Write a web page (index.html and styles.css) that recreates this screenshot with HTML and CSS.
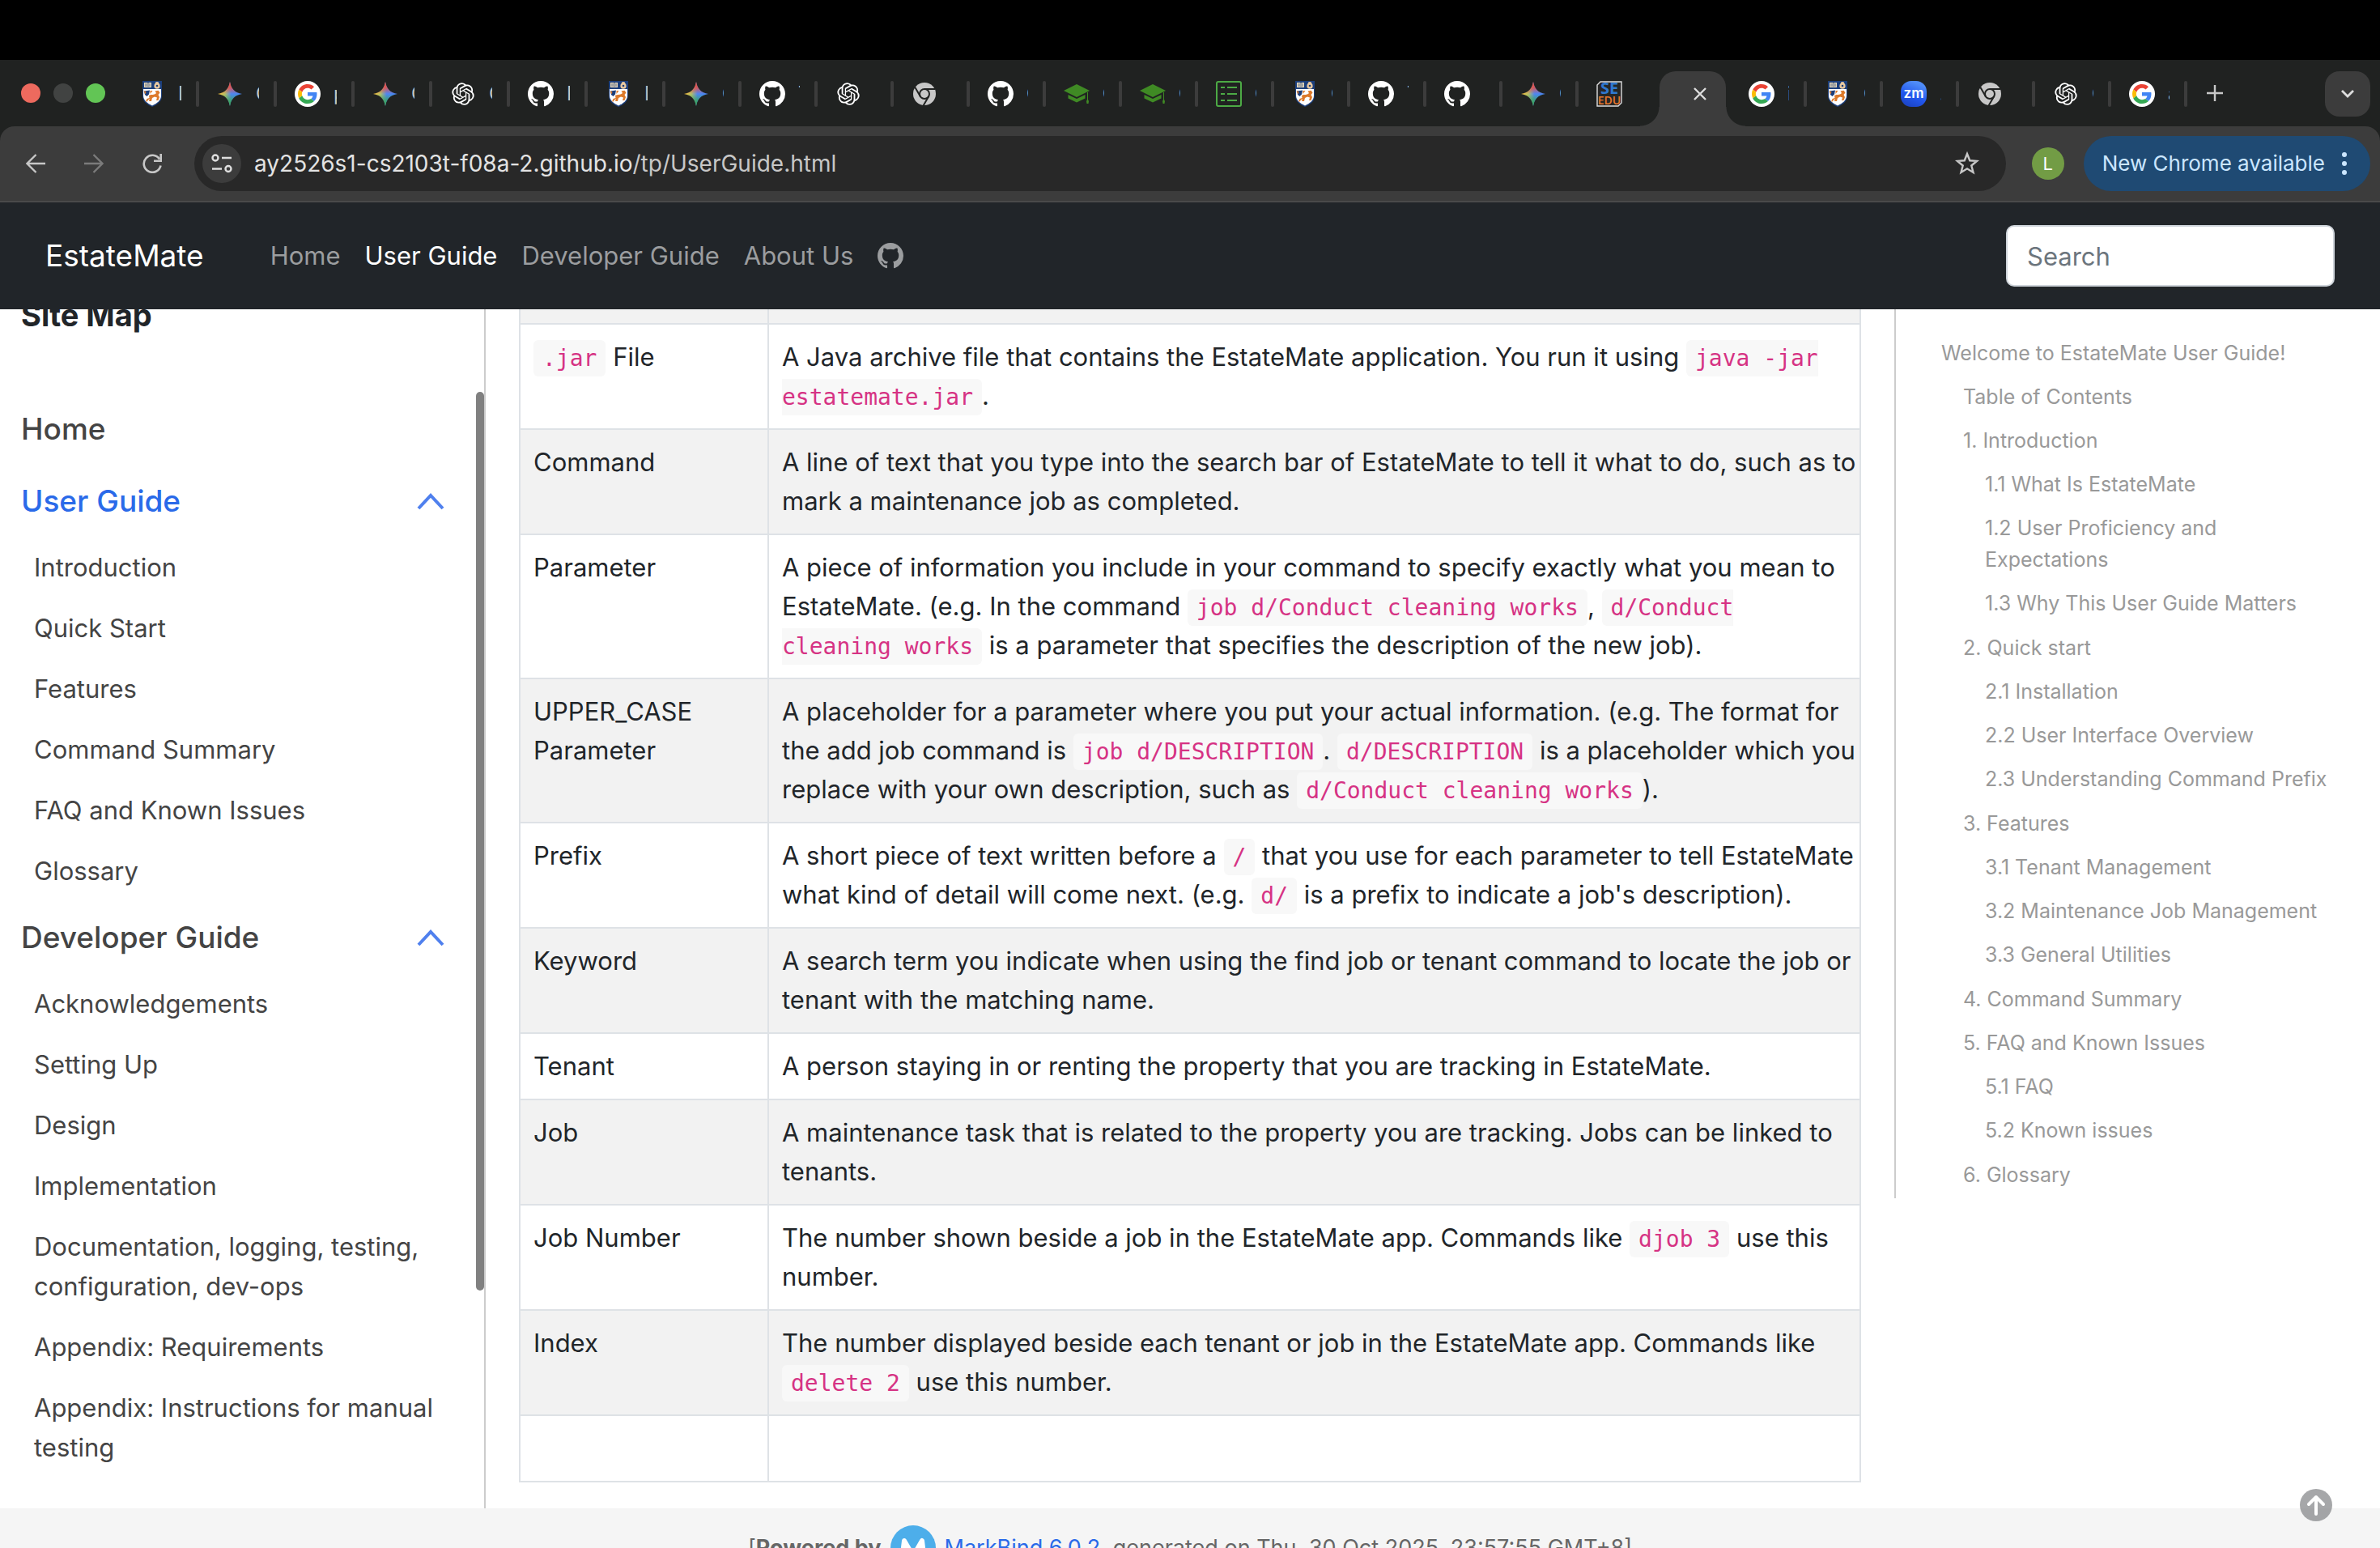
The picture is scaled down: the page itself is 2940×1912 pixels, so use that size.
FILE: index.html
```html
<!DOCTYPE html>
<html lang="en">
<head>
<meta charset="utf-8">
<title>EstateMate - User Guide</title>
<link rel="stylesheet" href="styles.css">
</head>
<body>
<svg class="sprite" aria-hidden="true">
  <defs>
    <linearGradient id="gem-fill" x1="0" y1="0.5" x2="1" y2="0.5"><stop offset="0.05" stop-color="#f5c33b"/><stop offset="0.3" stop-color="#b5bf6a"/><stop offset="0.55" stop-color="#4f86f3"/><stop offset="1" stop-color="#4285f4"/></linearGradient>
    <linearGradient id="gem-top" x1="0.5" y1="0" x2="0.5" y2="0.5"><stop offset="0.1" stop-color="#ee4d3f"/><stop offset="0.5" stop-color="#ee4d3f" stop-opacity="0.8"/><stop offset="1" stop-color="#ee4d3f" stop-opacity="0"/></linearGradient>
    <linearGradient id="gem-bottom" x1="0.5" y1="1" x2="0.5" y2="0.5"><stop offset="0.1" stop-color="#34a853"/><stop offset="0.5" stop-color="#34a853" stop-opacity="0.7"/><stop offset="1" stop-color="#34a853" stop-opacity="0"/></linearGradient>
    <linearGradient id="zoom-fill" x1="0" y1="1" x2="0.4" y2="0"><stop offset="0" stop-color="#1a3fb8"/><stop offset="0.5" stop-color="#2257ee"/><stop offset="1" stop-color="#4f8cf7"/></linearGradient>
  </defs>
  <symbol id="i-nus" viewBox="0 0 32 32">
    <path d="M4 0h24v18c0 7-5 11-12 14C9 29 4 25 4 18z" fill="#1c3f7c"/>
    <path d="M5 10h22v8c0 6-5 9.500-11 12.500C10 27.500 5 24 5 18z" fill="#fff"/>
    <path d="M6 2h4l1 .7L12 2h3v6h-3l-1 .6L10 8H6z" fill="#e9d9b8"/>
    <path d="M11 2.500v6M7 4h3M12 4h2M7 6h3M12 6h2" stroke="#1c3f7c" stroke-width="0.700"/>
    <circle cx="22" cy="3.500" r="2.400" fill="#e9c9a0"/><circle cx="22" cy="6.200" r="3.600" fill="#e9c9a0"/><circle cx="22" cy="6" r="1.300" fill="#1c3f7c"/>
    <path d="M6 12.500l7-1-1 5-2.500 2.500L7 17z" fill="#1c3f7c"/><path d="M5.500 12l3 1.500-1 3zM13.500 12l3 0-3 4z" fill="#dd7a2b"/>
    <path d="M12 18c3-2 6 0 9-3l-1.500-2.500 4-.8 2 2.800-2 2.500 1.500 3-1.500 4h-2.500l1-3.500-3-1-3 1.500-1 4h-3l1-3-2 1.500-1.500 2H8l1.500-3.500 3-1z" fill="#dd7a2b"/>
  </symbol>
  <symbol id="i-gemini" viewBox="0 0 32 32">
    <path d="M16 1c1.500 9 6 13.500 15 15-9 1.500-13.500 6-15 15-1.500-9-6-13.500-15-15 9-1.500 13.500-6 15-15z" fill="url(#gem-fill)"/>
    <path d="M16 1c1.500 9 6 13.500 15 15-9 1.500-13.500 6-15 15-1.500-9-6-13.500-15-15 9-1.500 13.500-6 15-15z" fill="url(#gem-top)"/>
    <path d="M16 1c1.500 9 6 13.500 15 15-9 1.500-13.500 6-15 15-1.500-9-6-13.500-15-15 9-1.500 13.500-6 15-15z" fill="url(#gem-bottom)"/>
  </symbol>
  <symbol id="i-google" viewBox="-8 -8 64 64">
    <circle cx="24" cy="24" r="32" fill="#fff"/>
    <path fill="#ea4335" d="M24 9.500c3.540 0 6.710 1.220 9.210 3.600l6.850-6.850C35.900 2.380 30.470 0 24 0 14.620 0 6.510 5.380 2.560 13.220l7.980 6.190C12.430 13.720 17.740 9.500 24 9.500z"/>
    <path fill="#4285f4" d="M46.980 24.550c0-1.570-.15-3.090-.38-4.550H24v9.020h12.940c-.58 2.960-2.260 5.480-4.780 7.180l7.730 6c4.510-4.180 7.090-10.360 7.090-17.650z"/>
    <path fill="#fbbc05" d="M10.530 28.590c-.48-1.450-.76-2.990-.76-4.590s.27-3.140.76-4.590l-7.980-6.190C.92 16.460 0 20.120 0 24c0 3.880.92 7.540 2.560 10.780l7.970-6.190z"/>
    <path fill="#34a853" d="M24 48c6.480 0 11.930-2.130 15.890-5.810l-7.730-6c-2.150 1.450-4.920 2.300-8.160 2.300-6.260 0-11.570-4.220-13.470-9.910l-7.980 6.190C6.510 42.620 14.620 48 24 48z"/>
  </symbol>
  <symbol id="i-gpt" viewBox="-2 -2 28 28">
    <path fill="#fff" d="M22.2819 9.8211a5.9847 5.9847 0 0 0-.5157-4.9108 6.0462 6.0462 0 0 0-6.5098-2.9A6.0651 6.0651 0 0 0 4.9807 4.1818a5.9847 5.9847 0 0 0-3.9977 2.9 6.0462 6.0462 0 0 0 .7427 7.0966 5.98 5.98 0 0 0 .511 4.9107 6.051 6.051 0 0 0 6.5146 2.9001A5.9847 5.9847 0 0 0 13.2599 24a6.0557 6.0557 0 0 0 5.7718-4.2058 5.9894 5.9894 0 0 0 3.9977-2.9001 6.0557 6.0557 0 0 0-.7475-7.0729zm-9.022 12.6081a4.4755 4.4755 0 0 1-2.8764-1.0408l.1419-.0804 4.7783-2.7582a.7948.7948 0 0 0 .3927-.6813v-6.7369l2.02 1.1686a.071.071 0 0 1 .038.052v5.5826a4.504 4.504 0 0 1-4.4945 4.4944zm-9.6607-4.1254a4.4708 4.4708 0 0 1-.5346-3.0137l.142.0852 4.783 2.7582a.7712.7712 0 0 0 .7806 0l5.8428-3.3685v2.3324a.0804.0804 0 0 1-.0332.0615L9.74 19.9502a4.4992 4.4992 0 0 1-6.1408-1.6464zM2.3408 7.8956a4.485 4.485 0 0 1 2.3655-1.9728V11.6a.7664.7664 0 0 0 .3879.6765l5.8144 3.3543-2.0201 1.1685a.0757.0757 0 0 1-.071 0l-4.8303-2.7865A4.504 4.504 0 0 1 2.3408 7.872zm16.5963 3.8558L13.1038 8.364 15.1192 7.2a.0757.0757 0 0 1 .071 0l4.8303 2.7913a4.4944 4.4944 0 0 1-.6765 8.1042v-5.6772a.79.79 0 0 0-.407-.667zm2.0107-3.0231l-.142-.0852-4.7735-2.7818a.7759.7759 0 0 0-.7854 0L9.409 9.2297V6.8974a.0662.0662 0 0 1 .0284-.0615l4.8303-2.7866a4.4992 4.4992 0 0 1 6.6802 4.66zM8.3065 12.863l-2.02-1.1638a.0804.0804 0 0 1-.038-.0567V6.0742a4.4992 4.4992 0 0 1 7.3757-3.4537l-.142.0805L8.704 5.459a.7948.7948 0 0 0-.3927.6813zm1.0976-2.3654l2.602-1.4998 2.6069 1.4998v2.9994l-2.5974 1.4997-2.6067-1.4997Z"/>
  </symbol>
  <symbol id="i-github" viewBox="0 0 16 16">
    <path fill="currentColor" d="M8 0C3.580 0 0 3.580 0 8c0 3.540 2.290 6.530 5.470 7.590.4.070.55-.17.55-.38 0-.19-.01-.82-.01-1.490-2.010.37-2.530-.49-2.690-.94-.09-.23-.48-.94-.82-1.130-.28-.15-.68-.52-.01-.53.63-.01 1.080.58 1.230.82.72 1.210 1.870.87 2.330.66.07-.52.28-.87.51-1.070-1.780-.2-3.640-.89-3.640-3.950 0-.87.31-1.590.82-2.150-.08-.2-.36-1.020.08-2.120 0 0 .67-.21 2.200.82.64-.18 1.320-.27 2-.27s1.360.09 2 .27c1.530-1.040 2.200-.82 2.200-.82.44 1.100.16 1.920.08 2.120.51.56.82 1.270.82 2.150 0 3.070-1.870 3.750-3.650 3.950.29.25.54.73.54 1.480 0 1.070-.01 1.930-.01 2.200 0 .21.15.46.55.38A8.010 8.010 0 0 0 16 8c0-4.420-3.580-8-8-8z"/>
  </symbol>
  <symbol id="i-chrome" viewBox="0 0 32 32">
    <circle cx="16" cy="16" r="14" fill="#c7c7c7"/>
    <circle cx="16" cy="16" r="7" fill="#202221"/>
    <circle cx="16" cy="16" r="5" fill="#c7c7c7"/>
    <path d="M16 10h13M10.800 19L4.300 7.800M21.200 19l-6.500 11.300" stroke="#202221" stroke-width="2" fill="none"/>
  </symbol>
  <symbol id="i-cap" viewBox="0 0 32 32">
    <path d="M16 4l16 8-16 8L0 12z" fill="#3f8a24"/><path d="M5.500 17L16 22l10.500-5v4.500L16 26.500 5.500 21.500z" fill="#3f8a24"/><path d="M29 14h1v9l1 2-.5 3h-2l-.5-3 1-2z" fill="#3f8a24"/>
  </symbol>
  <symbol id="i-list" viewBox="0 0 32 32">
    <rect x="1" y="1" width="30" height="30" rx="2" fill="none" stroke="#4caa45" stroke-width="2"/>
    <path d="M6 8h5M14 8h12M6 16h5M14 16h12M6 24h5M14 24h12" stroke="#4caa45" stroke-width="2"/>
  </symbol>
  <symbol id="i-seedu" viewBox="0 0 32 32">
    <path d="M5 1h26v26l-4 4H1V5z" fill="#262626" stroke="#ddd" stroke-width="1.400"/>
    <text x="16" y="16" text-anchor="middle" font-family="Open Sans" font-size="20" font-weight="700" fill="#2f78d0">SE</text>
    <text x="16" y="29" text-anchor="middle" font-family="Open Sans" font-size="14" font-weight="600" fill="#e8782c">EDU</text>
  </symbol>
  <symbol id="i-zoom" viewBox="0 0 32 32">
    <rect width="32" height="32" rx="13" fill="url(#zoom-fill)"/>
    <text x="16" y="21" text-anchor="middle" font-size="17" font-weight="600" fill="#fff">zm</text>
  </symbol>
</svg>

<div class="screen-top"></div>

<div class="window-top">
<div class="tabstrip">
  <div class="lights"><span class="light red"></span><span class="light off"></span><span class="light green"></span></div>
  <div class="tabs">
    <div class="tab wide"><svg><use href="#i-nus"/></svg><span>N</span></div>
    <div class="tab wide"><svg><use href="#i-gemini"/></svg><span>C</span></div>
    <div class="tab wide"><svg><use href="#i-google"/></svg><span>p</span></div>
    <div class="tab wide"><svg><use href="#i-gemini"/></svg><span>C</span></div>
    <div class="tab wide"><svg><use href="#i-gpt"/></svg><span>C</span></div>
    <div class="tab wide"><svg><use href="#i-github"/></svg><span>P</span></div>
    <div class="tab wide"><svg><use href="#i-nus"/></svg><span>N</span></div>
    <div class="tab"><svg><use href="#i-gemini"/></svg><span>C</span></div>
    <div class="tab"><svg><use href="#i-github"/></svg><span>T</span></div>
    <div class="tab"><svg><use href="#i-gpt"/></svg></div>
    <div class="tab"><svg><use href="#i-chrome"/></svg></div>
    <div class="tab"><svg><use href="#i-github"/></svg><span>C</span></div>
    <div class="tab"><svg><use href="#i-cap"/></svg><span>C</span></div>
    <div class="tab"><svg><use href="#i-cap"/></svg><span>C</span></div>
    <div class="tab"><svg><use href="#i-list"/></svg><span>C</span></div>
    <div class="tab"><svg><use href="#i-nus"/></svg><span>C</span></div>
    <div class="tab"><svg><use href="#i-github"/></svg><span>T</span></div>
    <div class="tab"><svg><use href="#i-github"/></svg></div>
    <div class="tab"><svg><use href="#i-gemini"/></svg><span>C</span></div>
    <div class="tab last"><svg><use href="#i-seedu"/></svg></div>
    <div class="tab active"><button class="close" aria-label="Close tab"><svg viewBox="0 0 16 16"><path d="M1 1l14 14M15 1L1 15" stroke="#dedede" stroke-width="2.400"/></svg></button></div>
    <div class="tab"><svg><use href="#i-google"/></svg><span>i</span></div>
    <div class="tab"><svg><use href="#i-nus"/></svg><span>C</span></div>
    <div class="tab"><svg><use href="#i-zoom"/></svg><span>.</span></div>
    <div class="tab"><svg><use href="#i-chrome"/></svg></div>
    <div class="tab"><svg><use href="#i-gpt"/></svg><span>C</span></div>
    <div class="tab"><svg><use href="#i-google"/></svg><span>a</span></div>
  </div>
  <button class="newtab" aria-label="New tab"><svg viewBox="0 0 20 20"><path d="M10 0v20M0 10h20" stroke="#c7c7c7" stroke-width="2.400"/></svg></button>
  <button class="tabsearch" aria-label="Search tabs"><svg viewBox="0 0 16 16"><path d="M1 4l7 7 7-7" fill="none" stroke="#dedede" stroke-width="2.800"/></svg></button>
</div>

<div class="toolbar">
  <button class="tool" aria-label="Back"><svg viewBox="0 0 24 24"><path d="M24 12H2M12.500 1L1.500 12l11 11" fill="none" stroke="#c7c7c7" stroke-width="2.400"/></svg></button>
  <button class="tool" aria-label="Forward"><svg viewBox="0 0 24 24"><path d="M0 12h22M11.500 1l11 11-11 11" fill="none" stroke="#7b7b7b" stroke-width="2.400"/></svg></button>
  <button class="tool" aria-label="Reload"><svg viewBox="0 0 24 24"><path d="M22.500 14.500A10.500 10.500 0 1 1 21 6.500" fill="none" stroke="#c7c7c7" stroke-width="2.600"/><path d="M22.700 0v8.700H14" fill="none" stroke="#c7c7c7" stroke-width="2.600"/></svg></button>
  <div class="omnibox">
    <span class="siteinfo"><svg viewBox="0 0 26 24"><g fill="none" stroke="#dedede" stroke-width="2.400"><circle cx="5" cy="5" r="3.500"/><path d="M13 5h12M1 18.500h12"/><circle cx="21" cy="18.500" r="3.500"/></g></svg></span>
    <span class="url">ay2526s1-cs2103t-f08a-2.github.io<span class="path">/tp/UserGuide.html</span></span>
    <svg class="star" viewBox="0 0 32 32"><path d="M16 4l3.300 8.300 8.700.6-6.700 5.600 2.200 8.500-7.500-4.700L8.500 27l2.200-8.500L4 12.900l8.700-.6z" fill="none" stroke="#c7c7c7" stroke-width="2.400"/></svg>
  </div>
  <span class="avatar">L</span>
  <button class="update">New Chrome available <svg viewBox="0 0 8 28"><circle cx="4" cy="3" r="3"/><circle cx="4" cy="14" r="3"/><circle cx="4" cy="25" r="3"/></svg></button>
</div>
</div>

<header class="navbar">
  <a class="brand" href="#">EstateMate</a>
  <nav>
    <a href="#">Home</a>
    <a href="#" class="current">User Guide</a>
    <a href="#">Developer Guide</a>
    <a href="#">About Us</a>
    <a href="#" aria-label="GitHub"><svg><use href="#i-github"/></svg></a>
  </nav>
  <input type="text" placeholder="Search" aria-label="Search">
</header>

<div class="columns">
  <aside class="sitenav">
    <h2>Site Map</h2>
    <a class="top" href="#">Home</a>
    <a class="top on" href="#">User Guide <svg viewBox="0 0 34 22"><path d="M2 20L17 4l15 16"/></svg></a>
    <ul>
      <li><a href="#">Introduction</a></li>
      <li><a href="#">Quick Start</a></li>
      <li><a href="#">Features</a></li>
      <li><a href="#">Command Summary</a></li>
      <li><a href="#">FAQ and Known Issues</a></li>
      <li><a href="#">Glossary</a></li>
    </ul>
    <a class="top" href="#">Developer Guide <svg viewBox="0 0 34 22"><path d="M2 20L17 4l15 16"/></svg></a>
    <ul>
      <li><a href="#">Acknowledgements</a></li>
      <li><a href="#">Setting Up</a></li>
      <li><a href="#">Design</a></li>
      <li><a href="#">Implementation</a></li>
      <li><a href="#">Documentation, logging, testing, configuration, dev-ops</a></li>
      <li><a href="#">Appendix: Requirements</a></li>
      <li><a href="#">Appendix: Instructions for manual testing</a></li>
    </ul>
    <span class="thumb"></span>
  </aside>

  <main>
    <table>
      <tbody>
        <tr class="cut"><td></td><td></td></tr>
        <tr><td><code>.jar</code> File</td><td>A Java archive file that contains the EstateMate application. You run it using <code>java -jar estatemate.jar</code>.</td></tr>
        <tr><td>Command</td><td>A line of text that you type into the search bar of EstateMate to tell it what to do, such as to mark a maintenance job as completed.</td></tr>
        <tr><td>Parameter</td><td>A piece of information you include in your command to specify exactly what you mean to EstateMate. (e.g. In the command <code>job d/Conduct cleaning works</code>, <code>d/Conduct<br>cleaning works</code> is a parameter that specifies the description of the new job).</td></tr>
        <tr><td>UPPER_CASE Parameter</td><td>A placeholder for a parameter where you put your actual information. (e.g. The format for the add job command is <code>job d/DESCRIPTION</code>. <code>d/DESCRIPTION</code> is a placeholder which you replace with your own description, such as <code>d/Conduct cleaning works</code>).</td></tr>
        <tr><td>Prefix</td><td>A short piece of text written before a <code>/</code> that you use for each parameter to tell EstateMate what kind of detail will come next. (e.g. <code>d/</code> is a prefix to indicate a job's description).</td></tr>
        <tr><td>Keyword</td><td>A search term you indicate when using the find job or tenant command to locate the job or tenant with the matching name.</td></tr>
        <tr><td>Tenant</td><td>A person staying in or renting the property that you are tracking in EstateMate.</td></tr>
        <tr><td>Job</td><td>A maintenance task that is related to the property you are tracking. Jobs can be linked to tenants.</td></tr>
        <tr><td>Job Number</td><td>The number shown beside a job in the EstateMate app. Commands like <code>djob 3</code> use this number.</td></tr>
        <tr><td>Index</td><td>The number displayed beside each tenant or job in the EstateMate app. Commands like <code>delete 2</code> use this number.</td></tr>
        <tr><td>&nbsp;</td><td></td></tr>
      </tbody>
    </table>
  </main>

  <aside class="toc">
    <a href="#">Welcome to EstateMate User Guide!</a>
    <ul>
      <li><a href="#">Table of Contents</a></li>
      <li><a href="#">1. Introduction</a>
        <ul><li><a href="#">1.1 What Is EstateMate</a></li><li><a href="#">1.2 User Proficiency and Expectations</a></li><li><a href="#">1.3 Why This User Guide Matters</a></li></ul></li>
      <li><a href="#">2. Quick start</a>
        <ul><li><a href="#">2.1 Installation</a></li><li><a href="#">2.2 User Interface Overview</a></li><li><a href="#">2.3 Understanding Command Prefix</a></li></ul></li>
      <li><a href="#">3. Features</a>
        <ul><li><a href="#">3.1 Tenant Management</a></li><li><a href="#">3.2 Maintenance Job Management</a></li><li><a href="#">3.3 General Utilities</a></li></ul></li>
      <li><a href="#">4. Command Summary</a></li>
      <li><a href="#">5. FAQ and Known Issues</a>
        <ul><li><a href="#">5.1 FAQ</a></li><li><a href="#">5.2 Known issues</a></li></ul></li>
      <li><a href="#">6. Glossary</a></li>
    </ul>
  </aside>
</div>

<footer>
  <span>[<b>Powered by</b></span>
  <svg viewBox="0 0 56 56"><circle cx="28" cy="28" r="28" fill="#4daeea"/><path d="M14 44l3-25 11 19 11-19 3 25" fill="none" stroke="#fff" stroke-width="6" stroke-linejoin="round" stroke-linecap="round"/></svg>
  <span><a href="#">MarkBind 6.0.2</a>, generated on Thu, 30 Oct 2025, 23:57:55 GMT+8]</span>
</footer>

<button class="totop" aria-label="Back to top"><svg viewBox="0 0 40 40"><circle cx="20" cy="20" r="20" fill="#808284" fill-opacity="0.700"/><path d="M20 31V10M11 19l9-9 9 9" fill="none" stroke="#fff" stroke-width="4" stroke-linecap="round" stroke-linejoin="round"/></svg></button>
</body>
</html>
```

FILE: styles.css
```css
* { box-sizing: border-box; }
body {
  margin: 0;
  height: 100vh;
  overflow: hidden;
  font: 31px/48px Inter, "Liberation Sans", sans-serif;
  color: #212529;
  background: #fff;
  display: flex;
  flex-direction: column;
}
body > * { flex: none; }
a { color: inherit; text-decoration: none; }
ul { list-style: none; margin: 0; padding: 0; }
button { border: 0; padding: 0; background: none; font: inherit; color: inherit; }
svg { display: block; }
.sprite { position: absolute; width: 0; height: 0; }

/* browser window */
.screen-top { height: 74px; background: #000; }
.window-top { background: #202221; }
.tabstrip { display: flex; height: 82px; padding-right: 12px; }
.lights { display: flex; align-items: center; gap: 16px; width: 150px; padding-left: 26px; }
.light { width: 24px; height: 24px; border-radius: 50%; }
.red { background: #ed6a5e; }
.off { background: #414342; }
.green { background: #62c555; }
.tabs { display: flex; }
.tab {
  position: relative;
  display: flex;
  align-items: center;
  width: 94px;
  padding: 2px 0 0 22px;
  color: #fff;
}
.tab.wide { width: 96px; }
.tab svg { width: 32px; height: 32px; }
.tab > span { width: 2px; margin-left: 16px; overflow: hidden; font-size: 24px; line-height: 32px; color: #c7c7c7; }
.tab.wide > span { width: 4px; }
.tab::after {
  content: "";
  position: absolute;
  right: 0;
  top: 26px;
  width: 4px;
  height: 32px;
  border-radius: 2px;
  background: #3c3c3c;
}
.tab.last::after { display: none; }
.tab.active { padding: 14px 6px 0; justify-content: center; }
.tab.active::after {
  left: -18px;
  right: -18px;
  top: 58px;
  width: auto;
  height: 24px;
  border-radius: 0;
  background:
    radial-gradient(circle at 0 0, transparent 23px, #3c3c3c 24px) 0 0 / 24px 24px no-repeat,
    radial-gradient(circle at 100% 0, transparent 23px, #3c3c3c 24px) 100% 0 / 24px 24px no-repeat;
}
.close {
  flex: 1;
  align-self: stretch;
  display: flex;
  justify-content: center;
  padding: 20px 0 0 18px;
  border-radius: 20px 20px 0 0;
  background: #3c3c3c;
}
.tab .close svg { width: 16px; height: 16px; }
.newtab { margin-left: 24px; }
.newtab svg { width: 20px; height: 20px; }
.tabsearch {
  margin: 14px 0 0 auto;
  width: 56px;
  height: 56px;
  border-radius: 18px;
  background: #3c3c3c;
  display: flex;
  align-items: center;
  justify-content: center;
}
.tabsearch svg { width: 16px; height: 16px; }

.toolbar {
  display: flex;
  align-items: center;
  height: 94px;
  padding: 0 12px 0 8px;
  border-bottom: 2px solid #4a4a4a;
  background: #3c3c3c;
  border-radius: 18px 18px 0 0;
}
.tool { width: 72px; height: 68px; display: flex; align-items: center; justify-content: center; }
.tool svg { width: 24px; height: 24px; }
.omnibox {
  flex: 1;
  display: flex;
  align-items: center;
  height: 68px;
  margin-left: 16px;
  padding: 0 32px 0 10px;
  border-radius: 34px;
  background: #282828;
}
.siteinfo { width: 48px; height: 48px; border-radius: 50%; background: #3c3c3c; display: flex; align-items: center; justify-content: center; }
.siteinfo svg { width: 26px; height: 24px; }
.url { flex: 1; margin-left: 16px; font-size: 28px; color: #e3e3e3; }
.path { color: #c7c7c7; }
.star { width: 32px; height: 32px; }
.avatar { width: 40px; height: 40px; margin: 0 24px 0 32px; border-radius: 50%; background: #729c45; color: #fff; font-size: 22px; line-height: 40px; text-align: center; }
.update { display: flex; align-items: center; gap: 20px; height: 68px; padding: 0 28px 0 23px; border-radius: 34px; background: #1f4a73; color: #cbe6ff; font-size: 26px; }
.update svg { width: 8px; height: 28px; fill: #cbe6ff; }

/* site header */
.navbar { position: relative; z-index: 2; display: flex; align-items: center; height: 132px; padding: 0 56px; background: #212529; }
.brand { color: #fff; font-size: 37px; margin-right: 82px; }
.navbar nav { display: flex; align-items: center; gap: 30px; color: #9b9d9f; }
.navbar nav svg { width: 32px; height: 32px; }
.navbar .current { color: #fff; }
.navbar input {
  width: 406px;
  height: 76px;
  margin-left: auto;
  padding: 0 24px;
  border: 2px solid #ced4da;
  border-radius: 10px;
  font: inherit;
  background: #fff;
}
.navbar input::placeholder { color: #6c757d; opacity: 1; }

.columns { display: flex; align-items: flex-start; height: 1481px; }

/* site map */
.sitenav { position: relative; align-self: stretch; width: 600px; padding: 0 40px 0 26px; border-right: 2px solid #ccc; color: #444; }
.sitenav h2 { margin: -21px 0 68px; font-size: 38px; line-height: 56px; color: #212529; }
.top { display: flex; align-items: center; justify-content: space-between; padding: 15px 9px 15px 0; font-size: 37px; line-height: 59px; font-weight: 500; }
.top.on { color: #2a6ae9; }
.top svg { width: 34px; height: 22px; fill: none; stroke: #4f80ee; stroke-width: 4; }
.sitenav ul { padding-left: 16px; }
.sitenav li { padding: 13px 0; line-height: 49px; }
.sitenav li a { display: block; }
.thumb { position: absolute; right: 0; top: 102px; width: 10px; height: 1110px; border-radius: 5px; background: #808080; }

/* glossary */
main { flex: 1; padding: 0 41px; overflow: hidden; }
table { width: 100%; border-collapse: collapse; table-layout: fixed; }
td { padding: 16px 4px 16px 16px; border: 2px solid #dee2e6; vertical-align: top; }
td:first-child { width: 307px; }
tr:nth-child(odd) { background: #f2f2f2; }
tr:last-child { background: #fff; }
.cut td { height: 18px; padding: 0; border-top: 0; }
code { padding: 6px 11px; border-radius: 6px; background: #f8f8f8; color: #d63384; font: 28px "DejaVu Sans Mono", monospace; }

/* page contents */
.toc { width: 600px; height: 1098px; padding: 28px 56px 0 56px; border-left: 2px solid #ccc; color: #999; font-size: 25px; line-height: 39px; }
.toc a { display: block; padding: 7px 0 8px; }
.toc ul { padding-left: 27px; }
.toc ul ul { padding-bottom: 1px; }

footer { display: flex; align-items: center; justify-content: center; gap: 11px; padding: 21px; background: #f5f5f5; color: #666; font-size: 27px; }
footer svg { width: 56px; height: 56px; }
footer a { color: #2a6ae9; }
.totop { position: absolute; right: 59px; bottom: 33px; }
.totop svg { width: 40px; height: 40px; }
```
